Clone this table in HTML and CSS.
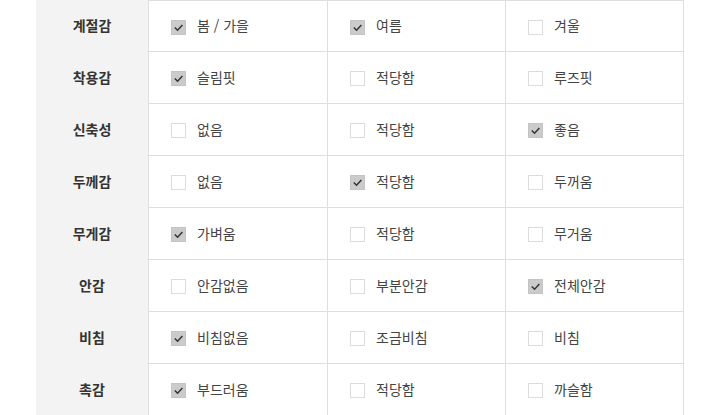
FILE: index.html
```html
<!DOCTYPE html>
<html lang="ko">
<head>
<meta charset="utf-8">
<link rel="stylesheet" href="styles.css">
</head>
<body>
<div class="sheet">
  <div class="label">계절감</div>
  <div class="opt first"><span class="box on"><svg viewBox="0 0 14 14"><path d="M3 7 L6 10 L11.2 4.3"/></svg></span><span class="txt">봄 / 가을</span></div>
  <div class="opt first"><span class="box on"><svg viewBox="0 0 14 14"><path d="M3 7 L6 10 L11.2 4.3"/></svg></span><span class="txt">여름</span></div>
  <div class="opt first"><span class="box"></span><span class="txt">겨울</span></div>

  <div class="label">착용감</div>
  <div class="opt"><span class="box on"><svg viewBox="0 0 14 14"><path d="M3 7 L6 10 L11.2 4.3"/></svg></span><span class="txt">슬림핏</span></div>
  <div class="opt"><span class="box"></span><span class="txt">적당함</span></div>
  <div class="opt"><span class="box"></span><span class="txt">루즈핏</span></div>

  <div class="label">신축성</div>
  <div class="opt"><span class="box"></span><span class="txt">없음</span></div>
  <div class="opt"><span class="box"></span><span class="txt">적당함</span></div>
  <div class="opt"><span class="box on"><svg viewBox="0 0 14 14"><path d="M3 7 L6 10 L11.2 4.3"/></svg></span><span class="txt">좋음</span></div>

  <div class="label">두께감</div>
  <div class="opt"><span class="box"></span><span class="txt">없음</span></div>
  <div class="opt"><span class="box on"><svg viewBox="0 0 14 14"><path d="M3 7 L6 10 L11.2 4.3"/></svg></span><span class="txt">적당함</span></div>
  <div class="opt"><span class="box"></span><span class="txt">두꺼움</span></div>

  <div class="label">무게감</div>
  <div class="opt"><span class="box on"><svg viewBox="0 0 14 14"><path d="M3 7 L6 10 L11.2 4.3"/></svg></span><span class="txt">가벼움</span></div>
  <div class="opt"><span class="box"></span><span class="txt">적당함</span></div>
  <div class="opt"><span class="box"></span><span class="txt">무거움</span></div>

  <div class="label">안감</div>
  <div class="opt"><span class="box"></span><span class="txt">안감없음</span></div>
  <div class="opt"><span class="box"></span><span class="txt">부분안감</span></div>
  <div class="opt"><span class="box on"><svg viewBox="0 0 14 14"><path d="M3 7 L6 10 L11.2 4.3"/></svg></span><span class="txt">전체안감</span></div>

  <div class="label">비침</div>
  <div class="opt"><span class="box on"><svg viewBox="0 0 14 14"><path d="M3 7 L6 10 L11.2 4.3"/></svg></span><span class="txt">비침없음</span></div>
  <div class="opt"><span class="box"></span><span class="txt">조금비침</span></div>
  <div class="opt"><span class="box"></span><span class="txt">비침</span></div>

  <div class="label">촉감</div>
  <div class="opt"><span class="box on"><svg viewBox="0 0 14 14"><path d="M3 7 L6 10 L11.2 4.3"/></svg></span><span class="txt">부드러움</span></div>
  <div class="opt"><span class="box"></span><span class="txt">적당함</span></div>
  <div class="opt"><span class="box"></span><span class="txt">까슬함</span></div>
</div>
</body>
</html>
```
FILE: styles.css
```css
html, body {
  margin: 0;
  padding: 0;
  background: #fff;
}
body {
  font-family: "Noto Sans CJK KR", "Noto Sans", sans-serif;
  overflow: hidden;
}
.sheet {
  display: grid;
  grid-template-columns: 113px 179px 178px 178px;
  grid-auto-rows: 52px;
  margin-left: 36px;
  width: 648px;
}
.label {
  box-sizing: border-box;
  background: #f3f3f3;
  border-right: 1px solid #dedede;
  display: flex;
  align-items: center;
  justify-content: center;
  font-size: 14px;
  font-weight: 700;
  color: #333;
  padding-bottom: 3px;
}
.opt {
  box-sizing: border-box;
  border-right: 1px solid #dedede;
  border-bottom: 1px solid #dedede;
  display: flex;
  align-items: center;
  padding-left: 22px;
}
.opt.first {
  border-top: 1px solid #dedede;
}
.box {
  box-sizing: border-box;
  width: 15px;
  height: 15px;
  border: 1px solid #dcdcdc;
  background: #fff;
  display: block;
  flex: none;
  margin-top: 2px;
}
.box.on {
  border-color: #c4c4c4;
  background: #cbcbcb;
}
.box svg {
  display: block;
  width: 13px;
  height: 13px;
}
.box svg path {
  fill: none;
  stroke: #333;
  stroke-width: 1.6;
}
.txt {
  margin-left: 11px;
  font-size: 14px;
  color: #444;
  padding-bottom: 2px;
}
```
